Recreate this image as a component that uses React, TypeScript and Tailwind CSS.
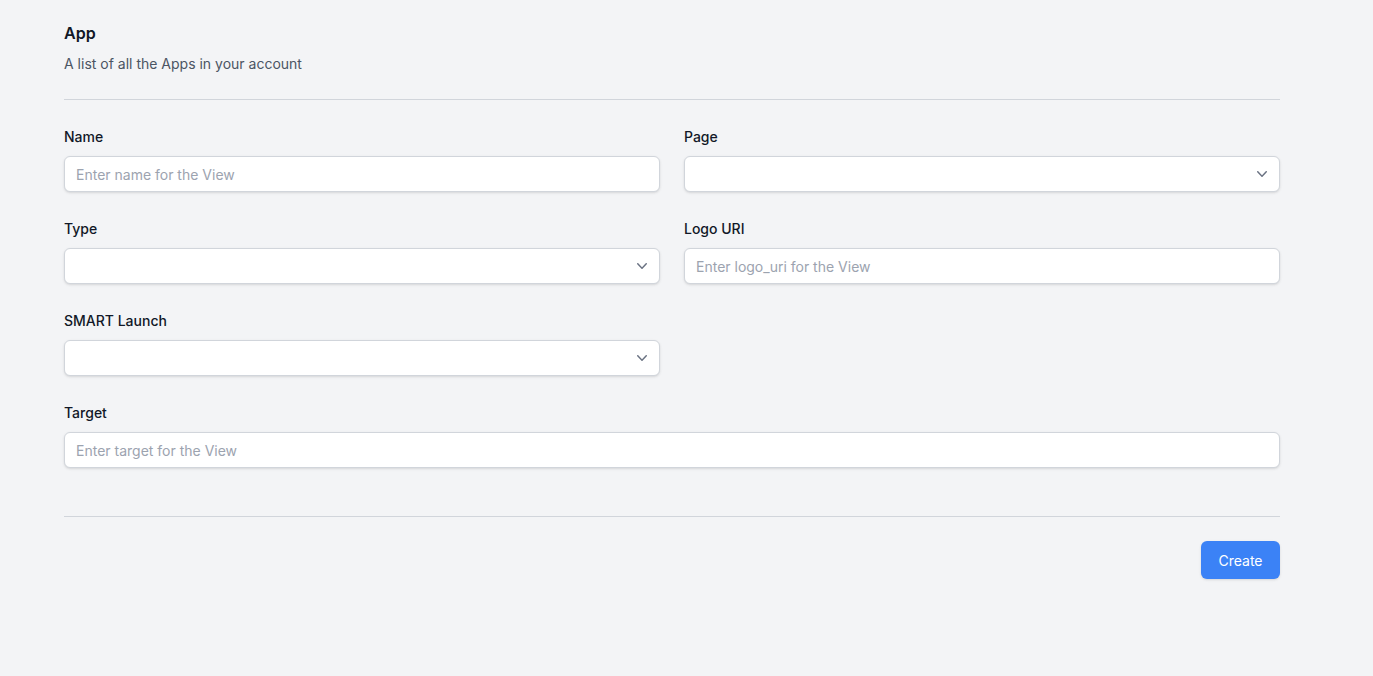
import React from 'react';

const font = { fontFamily: 'Inter, "Noto Sans", sans-serif' };

const Chevron: React.FC = () => (
  <svg
    className="pointer-events-none absolute right-2 top-1/2 h-5 w-5 -translate-y-1/2 text-gray-500"
    viewBox="0 0 20 20"
    fill="currentColor"
  >
    <path
      fillRule="evenodd"
      d="M5.23 7.21a.75.75 0 011.06.02L10 11.168l3.71-3.938a.75.75 0 111.08 1.04l-4.25 4.5a.75.75 0 01-1.08 0l-4.25-4.5a.75.75 0 01.02-1.06z"
      clipRule="evenodd"
    />
  </svg>
);

const Label: React.FC<{ children: React.ReactNode }> = ({ children }) => (
  <label className="block text-sm font-medium leading-6 text-[#111827]">{children}</label>
);

const TextField: React.FC<{ label: string; placeholder: string; className?: string }> = ({
  label,
  placeholder,
  className,
}) => (
  <div className={className}>
    <Label>{label}</Label>
    <input
      type="text"
      placeholder={placeholder}
      className="mt-[7px] block h-9 w-full rounded-md border border-[#d1d5db] bg-white px-[11px] text-sm text-gray-900 shadow-sm outline-none placeholder:text-[#9ca3af]"
    />
  </div>
);

const SelectField: React.FC<{ label: string }> = ({ label }) => (
  <div>
    <Label>{label}</Label>
    <div className="relative mt-[7px]">
      <select className="block h-9 w-full appearance-none rounded-md border border-[#d1d5db] bg-white px-[11px] text-sm text-gray-900 shadow-sm outline-none">
        <option value=""></option>
      </select>
      <Chevron />
    </div>
  </div>
);

export default function App() {
  return (
    <div className="min-h-[676px] bg-[#f3f4f6]" style={font}>
      <div className="ml-16 w-[1216px] pt-[19px]">
        {/* Header */}
        <div className="border-b border-[#d1d5db] pb-[23px]">
          <h2 className="text-base font-semibold leading-7 text-[#111827]">App</h2>
          <p className="mt-[5px] text-sm leading-6 text-[#4b5563]">A list of all the Apps in your account</p>
        </div>

        {/* Form */}
        <div className="grid grid-cols-2 gap-x-6 gap-y-[25px] border-b border-[#d1d5db] pb-12 pt-[25px]">
          <TextField label="Name" placeholder="Enter name for the View" />
          <SelectField label="Page" />
          <SelectField label="Type" />
          <TextField label="Logo URI" placeholder="Enter logo_uri for the View" />
          <SelectField label="SMART Launch" />
          <div />
          <TextField className="col-span-2" label="Target" placeholder="Enter target for the View" />
        </div>

        <div className="flex justify-end pt-6">
          <button className="flex h-[38px] w-[79px] items-center justify-center rounded-md bg-[#3b82f6] pt-[2px] text-sm font-normal leading-5 text-white shadow-sm">
            Create
          </button>
        </div>
      </div>
    </div>
  );
}
